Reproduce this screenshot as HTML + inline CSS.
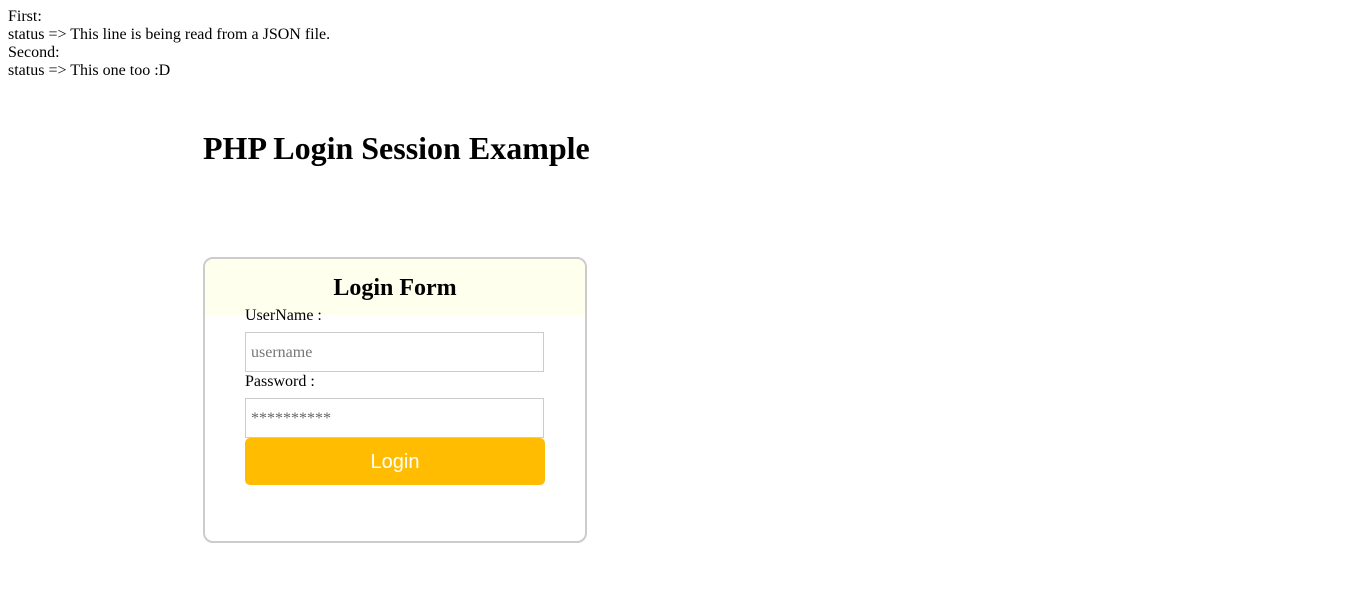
<!DOCTYPE html>
<html><head><style>
body{margin:0;font-family:"Liberation Serif",serif;font-size:16px;color:#000;background:#fff;}
.top{position:absolute;left:8px;top:8px;line-height:18px;}
h1{position:absolute;left:203px;top:128px;margin:0;font-size:32px;font-weight:bold;line-height:40px;}
.box{position:absolute;left:203px;top:257px;width:380px;height:282px;border:2px solid #ccc;border-radius:10px;overflow:hidden;}
.hd{position:absolute;left:0;top:0;width:100%;height:56px;background:#ffffee;}
h2{position:absolute;left:0;width:100%;top:14px;margin:0;text-align:center;font-size:24px;line-height:30px;}
.lbl{position:absolute;left:40px;line-height:18px;}
.in{position:absolute;left:40px;width:297px;height:38px;border:1px solid #ccc;background:#fff;color:#777;box-sizing:content-box;}
.in span{position:absolute;left:5px;top:11px;line-height:18px;}
.btn{position:absolute;left:40px;top:179px;width:300px;height:47px;background:#ffbc00;border-radius:5px;color:#fff;font-family:"Liberation Sans",sans-serif;font-size:20px;text-align:center;line-height:48px;}
</style></head><body>
<div class="top">First:<br>status =&gt; This line is being read from a JSON file.<br>Second:<br>status =&gt; This one too :D</div>
<h1>PHP Login Session Example</h1>
<div class="box">
<div class="hd"></div>
<h2>Login Form</h2>
<div class="lbl" style="top:48px">UserName :</div>
<div class="in" style="top:73px"><span>username</span></div>
<div class="lbl" style="top:114px">Password :</div>
<div class="in" style="top:139px"><span style="color:#666;letter-spacing:0px">**********</span></div>
<div class="btn">Login</div>
</div>
</body></html>
